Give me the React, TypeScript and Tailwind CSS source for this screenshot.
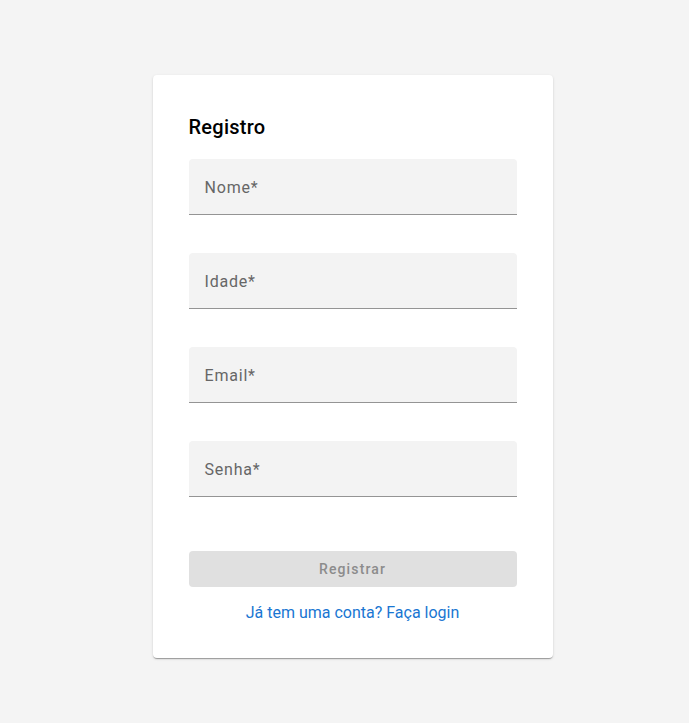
import React from 'react';

const fields = ['Nome*', 'Idade*', 'Email*', 'Senha*'];

const Field = ({ label }: { label: string }) => (
  <div className="h-14 rounded-t bg-[#f3f3f3] border-b border-[#949494] flex items-center px-4 pt-[2px]">
    <span className="text-base tracking-[0.05em] text-[#666666]">{label}</span>
  </div>
);

export default function App() {
  return (
    <div
      className="min-h-screen bg-[#f4f4f4] flex justify-center pt-[75px] pl-4"
      style={{ fontFamily: 'Roboto, "Liberation Sans", sans-serif' }}
    >
      <div className="w-[400px] h-fit bg-white rounded shadow-[0_2px_1px_-1px_rgba(0,0,0,0.2),0_1px_1px_0_rgba(0,0,0,0.14),0_1px_3px_0_rgba(0,0,0,0.12)] px-9 pt-9 pb-[33px]">
        <h1 className="text-xl font-medium leading-8 tracking-[0.0125em] text-black">Registro</h1>
        <div className="mt-4 flex flex-col gap-[38px]">
          {fields.map((f) => (
            <Field key={f} label={f} />
          ))}
        </div>
        <button
          disabled
          className="mt-[54px] w-full h-9 rounded bg-[#e0e0e0] text-sm font-medium tracking-[0.08em] text-[#8c8c8c]"
        >
          Registrar
        </button>
        <div className="mt-[14px] text-center leading-6">
          <a className="text-base text-[#1976d2]">Já tem uma conta? Faça login</a>
        </div>
      </div>
    </div>
  );
}
